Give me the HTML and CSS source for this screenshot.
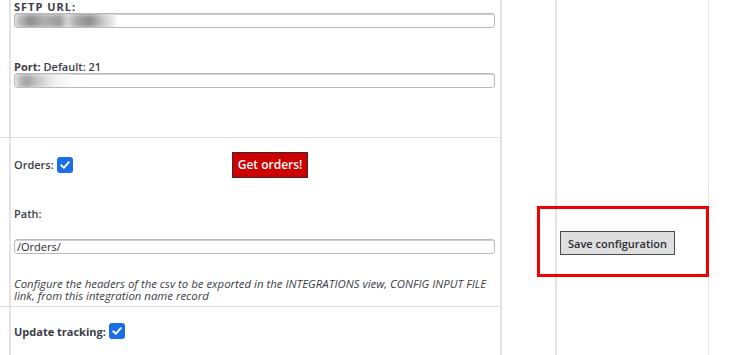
FILE: index.html
```html
<!DOCTYPE html>
<html>

<head>
    <title>Integration config</title>
    <link rel="stylesheet" href="styles.css">
</head>

<body>
    <div class="layout">
        <div class="form">
            <div class="row row-sftp">
                <div class="gutter"></div>
                <div class="cell">
                    <label class="lbl lbl-sftp">SFTP URL:</label>
                    <div class="field"><span class="hidden-val wide"></span></div>
                    <label class="lbl lbl-port">Port: <span class="normal">Default: 21</span></label>
                    <div class="field"><span class="hidden-val short"></span></div>
                </div>
            </div>
            <div class="row row-orders">
                <div class="gutter"></div>
                <div class="cell">
                    <div class="orders-line">
                        <span class="plain">Orders:</span>
                        <span class="check"><svg width="12" height="12" viewBox="0 0 12 12"><path d="M2.2 6.3 L4.8 8.8 L9.8 3.2" fill="none" stroke="#fff" stroke-width="1.9" stroke-linecap="round" stroke-linejoin="round"/></svg></span>
                        <button class="btn-red">Get orders!</button>
                    </div>
                    <div class="plain path-lbl">Path:</div>
                    <div class="field path-field">/Orders/</div>
                    <p class="note">Configure the headers of the csv to be exported in the INTEGRATIONS view, CONFIG INPUT FILE link, from this integration name record</p>
                </div>
            </div>
            <div class="row row-track">
                <div class="gutter"></div>
                <div class="cell">
                    <span class="lbl">Update tracking:</span>
                    <span class="check"><svg width="12" height="12" viewBox="0 0 12 12"><path d="M2.2 6.3 L4.8 8.8 L9.8 3.2" fill="none" stroke="#fff" stroke-width="1.9" stroke-linecap="round" stroke-linejoin="round"/></svg></span>
                </div>
            </div>
        </div>
        <div class="col-mid"></div>
        <div class="col-save">
            <button class="btn-save">Save configuration</button>
        </div>
        <div class="col-end"></div>
    </div>
    <div class="highlight"></div>
</body>

</html>
```

FILE: styles.css
```css
body {
    margin: 0;
    font-family: "Open Sans", "Noto Sans", sans-serif;
    font-size: 11px;
    color: #3b3d48;
    background: #fff;
    overflow: hidden;
}

.layout {
    display: flex;
    height: 355px;
}

.form {
    width: 500px;
    display: flex;
    flex-direction: column;
}

.row {
    display: flex;
    border-bottom: 1px solid #dcdcdc;
}

.row-sftp {
    height: 137px;
}

.row-orders {
    height: 169px;
}

.row-track {
    flex: 1;
    border-bottom: none;
}

.gutter {
    width: 9px;
    border-right: 2px solid #e4e4e4;
}

.cell {
    flex: 1;
    padding: 0 5px 0 3px;
}

.lbl {
    display: block;
    font-weight: bold;
    line-height: 13px;
}

.lbl-sftp {
    letter-spacing: 1px;
}

.normal {
    font-weight: 600;
}

.lbl-port {
    margin-top: 32px;
}

.field {
    height: 13px;
    border: 1px solid #b9b9c0;
    border-radius: 3px;
    box-shadow: inset 0 1px 0 #d0d0d6;
    overflow: hidden;
    display: flex;
    align-items: center;
}

.hidden-val {
    display: block;
    height: 14px;
    filter: blur(2px);
}

.hidden-val.wide {
    width: 100px;
    background: linear-gradient(90deg, #cfcfcf 0%, #8f8f8f 15%, #b0b0b0 30%, #9a9a9a 45%, #d8d8d8 52%, #a6a6a6 62%, #8e8e8e 75%, #c8c8c8 88%, #eeeeee 100%);
}

.hidden-val.short {
    width: 55px;
    background: linear-gradient(90deg, #d8d8d8 0%, #9f9f9f 20%, #c4c4c4 40%, #efefef 70%, #fbfbfb 100%);
}

.orders-line {
    display: flex;
    align-items: center;
    margin-top: 13px;
    height: 28px;
}

.plain {
    font-weight: 600;
}

.check {
    display: inline-flex;
    align-items: center;
    justify-content: center;
    width: 16px;
    height: 16px;
    background: #1a6ee8;
    border-radius: 3px;
    margin-left: 3px;
    vertical-align: middle;
}

.btn-red {
    margin-left: 159px;
    height: 26px;
    padding: 0 5px;
    background: #cc0000;
    color: #fff;
    border: 1px solid #3a2a2a;
    font-family: inherit;
    font-size: 12px;
    font-weight: 600;
}

.path-lbl {
    margin-top: 27px;
}

.path-field {
    margin-top: 18px;
    padding-left: 2px;
    height: 13px;
    font-size: 11px;
    color: #2a2a34;
}

.note {
    margin: 24px 0 0;
    font-style: italic;
    font-size: 11.4px;
    line-height: 12px;
}

.row-track .cell {
    display: flex;
    align-items: center;
    height: 48px;
}

.row-track .lbl {
    display: inline;
}

.col-mid {
    width: 53px;
    border-left: 2px solid #e4e4e4;
}

.col-save {
    width: 151px;
    border-left: 2px solid #e4e4e4;
    border-right: 1px solid #e4e4e4;
    display: flex;
    align-items: center;
}

.btn-save {
    margin-left: 3px;
    margin-top: 131px;
    height: 24px;
    padding: 0 7px;
    background: #dedede;
    border: 1px solid #4a4a4a;
    color: #2e2e38;
    font-family: inherit;
    font-size: 11px;
    font-weight: 600;
}

.col-end {
    flex: 1;
}

.highlight {
    position: absolute;
    left: 537px;
    top: 206px;
    width: 166px;
    height: 65px;
    border: 3px solid #f00000;
}
```
